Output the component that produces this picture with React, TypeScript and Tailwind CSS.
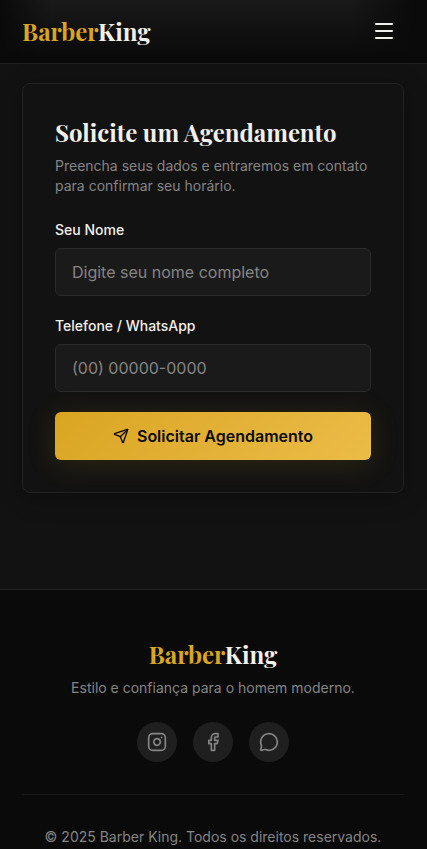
import { Facebook, Instagram, MessageCircle, Send } from "lucide-react";

const serif = "font-['Playfair_Display','Liberation_Serif',serif]";

function Logo() {
  return (
    <a
      href="#inicio"
      className={`${serif} text-2xl leading-8 font-bold text-[#f2f0eb]`}
    >
      <span className="text-[#daa520]">Barber</span>King
    </a>
  );
}

function Header() {
  return (
    <header className="sticky top-0 z-10 flex h-16 items-center justify-between border-b border-[#1f1f1f] bg-[linear-gradient(to_bottom,#0a0a0a00,#0a0a0a_90%),linear-gradient(to_right,#0a0a0a,#181918_12%,#181918_82%,#0a0a0a_97%)] pr-[23px] pb-px pl-[22px]">
      <Logo />
      <button
        type="button"
        aria-label="Abrir menu"
        className="flex size-10 flex-col items-center justify-center gap-[5px]"
      >
        <span className="h-0.5 w-[18px] rounded-xs bg-[#f2f0eb]" />
        <span className="h-0.5 w-[18px] rounded-xs bg-[#f2f0eb]" />
        <span className="h-0.5 w-[18px] rounded-xs bg-[#f2f0eb]" />
      </button>
    </header>
  );
}

type FieldProps = { id: string; label: string; type: string; placeholder: string };

function Field({ id, label, type, placeholder }: FieldProps) {
  return (
    <div className="flex flex-col gap-2">
      <label htmlFor={id} className="text-sm leading-5 font-medium text-[#f2f0eb]">
        {label}
      </label>
      <input
        id={id}
        type={type}
        placeholder={placeholder}
        className="h-12 w-full rounded-md border border-[#2b2b2b] bg-[#1a1a1a] px-4 text-base text-[#f2f0eb] outline-none placeholder:text-[#858585] focus:border-[#daa520]"
      />
    </div>
  );
}

function BookingForm() {
  return (
    <form className="rounded-lg border border-[#222222] bg-[#121212] p-8 shadow-[0_4px_24px_rgba(0,0,0,0.3)]">
      <h2 className={`${serif} text-2xl leading-8 font-bold text-[#f2f0eb]`}>
        Solicite um Agendamento
      </h2>
      <p className="mt-2 text-sm leading-5 text-[#858585]">
        Preencha seus dados e entraremos em contato para confirmar seu horário.
      </p>
      <div className="mt-6 flex flex-col gap-5">
        <Field id="nome" label="Seu Nome" type="text" placeholder="Digite seu nome completo" />
        <Field id="telefone" label="Telefone / WhatsApp" type="tel" placeholder="(00) 00000-0000" />
        <button
          type="submit"
          className="flex h-12 w-full items-center justify-center gap-2 rounded-md bg-linear-135 from-[#daa520] to-[#ebbc47] text-base font-semibold text-[#0a0a0a] shadow-[0_4px_30px_rgba(218,165,32,0.15)]"
        >
          <Send size={16} aria-hidden="true" />
          Solicitar Agendamento
        </button>
      </div>
    </form>
  );
}

const socials = [
  { name: "Instagram", href: "#instagram", Icon: Instagram },
  { name: "Facebook", href: "#facebook", Icon: Facebook },
  { name: "WhatsApp", href: "#whatsapp", Icon: MessageCircle },
];

function Footer() {
  return (
    <footer className="flex-1 border-t border-[#222222] bg-[#0a0a0a] pt-12 pr-[23px] pl-[22px] text-center text-sm leading-5 text-[#858585]">
      <div className="flex flex-col items-center">
        <Logo />
        <p className="mt-2">Estilo e confiança para o homem moderno.</p>
        <nav aria-label="Redes sociais" className="mt-6 flex gap-4">
          {socials.map(({ name, href, Icon }) => (
            <a
              key={name}
              href={href}
              aria-label={name}
              className="flex size-10 items-center justify-center rounded-full bg-[#1f1f1f]"
            >
              <Icon size={20} aria-hidden="true" />
            </a>
          ))}
        </nav>
      </div>
      <p className="mt-8 border-t border-[#181818] pt-8">
        © 2025 Barber King. Todos os direitos reservados.
      </p>
    </footer>
  );
}

export default function App() {
  return (
    <div className="flex min-h-screen flex-col bg-[#121212] font-['Inter',sans-serif]">
      <Header />
      <main className="pt-[19px] pr-[23px] pb-24 pl-[22px]">
        <BookingForm />
      </main>
      <Footer />
    </div>
  );
}
